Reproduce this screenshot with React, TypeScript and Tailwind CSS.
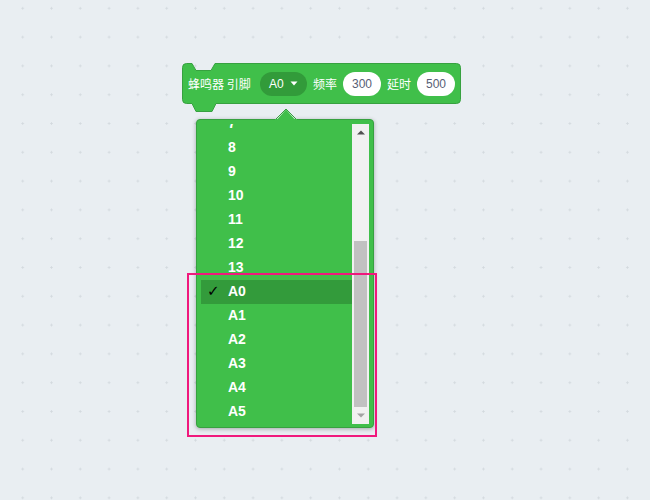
import React from 'react';

const pins = ['0', '1', '2', '3', '4', '5', '6', '7', '8', '9', '10', '11', '12', '13', 'A0', 'A1', 'A2', 'A3', 'A4', 'A5'];

// list is scrolled to the bottom: row "7" is half hidden at the top
const firstVisible = 7;

function NumberField({ value }: { value: string }) {
  return (
    <div className="flex h-[24px] w-[38px] items-center justify-center rounded-full bg-white text-[12px] text-[#575e75]">
      {value}
    </div>
  );
}

function BuzzerBlock() {
  return (
    <div className="absolute left-[182px] top-[63px] h-[41px] w-[279px]">
      {/* block outline with notch and tab */}
      <svg className="absolute left-0 top-0 overflow-visible" width="279" height="50" viewBox="0 0 279 50">
        <path
          d="M0.5,4.5 A4,4 0 0 1 4.5,0.5 H10 L14,7.5 H29 L33,0.5 H274.5 A4,4 0 0 1 278.5,4.5 V36.5 A4,4 0 0 1 274.5,40.5 H34 L30,48.5 H14 L10,40.5 H4.5 A4,4 0 0 1 0.5,36.5 Z"
          fill="#40bf4a"
          stroke="#37a140"
          strokeLinejoin="round"
        />
      </svg>
      <div className="relative flex h-full items-center gap-[6px] pl-[6px] text-[12px] text-white">
        <span className="w-[66px] whitespace-nowrap font-['Noto_Sans_CJK_SC',sans-serif]">蜂鸣器&nbsp;引脚</span>
        <div className="flex h-[24px] w-[47px] items-center gap-[6px] rounded-full bg-[#329b3a] pl-[9px]">
          <span>A0</span>
          <svg width="8" height="5" viewBox="0 0 8 5">
            <path d="M0.5,0.5 H7.5 L4,4.5 Z" fill="white" />
          </svg>
        </div>
        <span className="font-['Noto_Sans_CJK_SC',sans-serif]">频率</span>
        <NumberField value="300" />
        <span className="font-['Noto_Sans_CJK_SC',sans-serif]">延时</span>
        <NumberField value="500" />
      </div>
    </div>
  );
}

function PinMenu({ selected }: { selected: string }) {
  return (
    <>
      <div className="absolute left-[196px] top-[119px] flex h-[309px] w-[178px] rounded-[4px] border border-[#37a140] bg-[#40bf4a] pb-[3px] pl-[4px] pr-[4px] pt-[4px] shadow-[0_1px_4px_rgba(0,0,0,0.3)]">
        <div className="h-[300px] flex-1 overflow-hidden">
          <div className="-mt-[12px]">
            {pins.slice(firstVisible).map((pin) => (
              <div
                key={pin}
                className={`flex h-[24px] items-center pb-[1px] text-[14px] font-bold text-white ${pin === selected ? 'bg-[#339b3b]' : ''}`}
              >
                <span className="w-[27px] pl-[6px] font-['DejaVu_Sans',sans-serif] text-[15px] font-normal text-black">
                  {pin === selected ? '✓' : ''}
                </span>
                <span>{pin}</span>
              </div>
            ))}
          </div>
        </div>

        {/* scrollbar */}
        <div className="flex w-[17px] flex-col bg-[#f1f1f1]">
          <div className="flex h-[17px] items-center justify-center">
            <svg width="8" height="5" viewBox="0 0 8 5">
              <path d="M0,4.5 H8 L4,0.5 Z" fill="#505050" />
            </svg>
          </div>
          <div className="h-[100px]" />
          <div className="mx-[2px] h-[166px] bg-[#c1c1c1]" />
          <div className="flex h-[17px] items-center justify-center">
            <svg width="8" height="5" viewBox="0 0 8 5">
              <path d="M0,0.5 H8 L4,4.5 Z" fill="#a3a3a3" />
            </svg>
          </div>
        </div>
      </div>

      {/* pointer arrow */}
      <svg className="absolute left-[275px] top-[108px]" width="22" height="14" viewBox="0 0 22 14">
        <polygon points="0,14 11,1.5 22,14" fill="#40bf4a" />
        <polyline points="0.5,11.5 11,1 21.5,11.5" fill="none" stroke="#37a140" />
        <rect x="0" y="11" width="22" height="3" fill="#40bf4a" />
      </svg>
    </>
  );
}

export default function App() {
  return (
    <div className="relative h-[500px] w-[650px] overflow-hidden bg-[#e9eef2] font-['Liberation_Sans','Noto_Sans_CJK_SC',sans-serif] [background-image:radial-gradient(circle,#d3d9de_0.9px,transparent_1.3px)] [background-position:8.3px_-6.1px] [background-size:28.8px_28.8px]">
      <BuzzerBlock />
      <PinMenu selected="A0" />
      {/* highlight box */}
      <div className="absolute left-[187px] top-[273px] h-[164px] w-[190px] border-2 border-[#f0197d]" />
    </div>
  );
}
